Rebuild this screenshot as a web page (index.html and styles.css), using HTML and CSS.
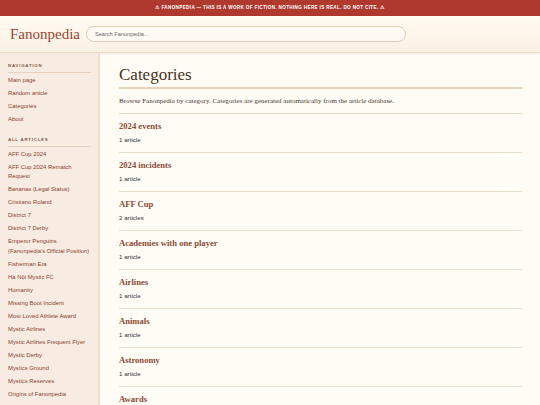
FILE: index.html
```html
<!DOCTYPE html>
<html lang="en">

<head>
    <meta charset="UTF-8">
    <meta name="viewport" content="width=device-width, initial-scale=1.0">
    <title>Categories - Fanonpedia</title>
    <link rel="stylesheet" href="styles.css">
</head>

<body>
    <div class="banner">&#9888; Fanonpedia &mdash; This is a work of fiction. Nothing here is real. Do not cite. &#9888;</div>

    <header class="site-header">
        <a class="logo" href="#">Fanonpedia</a>
        <input class="search" type="text" placeholder="Search Fanonpedia...">
    </header>

    <div class="layout">
        <!-- Sidebar -->
        <nav class="sidebar">
            <div class="side-section">
                <h4 class="side-title">Navigation</h4>
                <ul class="side-list">
                    <li><a href="#">Main page</a></li>
                    <li><a href="#">Random article</a></li>
                    <li><a href="#">Categories</a></li>
                    <li><a href="#">About</a></li>
                </ul>
            </div>
            <div class="side-section">
                <h4 class="side-title">All articles</h4>
                <ul class="side-list">
                    <li><a href="#">AFF Cup 2024</a></li>
                    <li><a href="#">AFF Cup 2024 Rematch Request</a></li>
                    <li><a href="#">Bananas (Legal Status)</a></li>
                    <li><a href="#">Cristiano Roland</a></li>
                    <li><a href="#">District 7</a></li>
                    <li><a href="#">District 7 Derby</a></li>
                    <li><a href="#">Emperor Penguins (Fanonpedia's Official Position)</a></li>
                    <li><a href="#">Fisherman Era</a></li>
                    <li><a href="#">Hà Nội Mystic FC</a></li>
                    <li><a href="#">Humanity</a></li>
                    <li><a href="#">Missing Boot Incident</a></li>
                    <li><a href="#">Most Loved Athlete Award</a></li>
                    <li><a href="#">Mystic Airlines</a></li>
                    <li><a href="#">Mystic Airlines Frequent Flyer</a></li>
                    <li><a href="#">Mystic Derby</a></li>
                    <li><a href="#">Mystics Ground</a></li>
                    <li><a href="#">Mystics Reserves</a></li>
                    <li><a href="#">Origins of Fanonpedia</a></li>
                    <li><a href="#">Partnerships Policy</a></li>
                </ul>
            </div>
        </nav>

        <!-- Contenuto principale -->
        <main class="content">
            <h1 class="page-title">Categories</h1>
            <p class="intro">Browse Fanonpedia by category. Categories are generated automatically from the article database.</p>

            <div class="cat-list">
                <div class="cat">
                    <a class="cat-name" href="#">2024 events</a>
                    <div class="cat-count">1 article</div>
                </div>
                <div class="cat">
                    <a class="cat-name" href="#">2024 incidents</a>
                    <div class="cat-count">1 article</div>
                </div>
                <div class="cat">
                    <a class="cat-name" href="#">AFF Cup</a>
                    <div class="cat-count">2 articles</div>
                </div>
                <div class="cat">
                    <a class="cat-name" href="#">Academies with one player</a>
                    <div class="cat-count">1 article</div>
                </div>
                <div class="cat">
                    <a class="cat-name" href="#">Airlines</a>
                    <div class="cat-count">1 article</div>
                </div>
                <div class="cat">
                    <a class="cat-name" href="#">Animals</a>
                    <div class="cat-count">1 article</div>
                </div>
                <div class="cat">
                    <a class="cat-name" href="#">Astronomy</a>
                    <div class="cat-count">1 article</div>
                </div>
                <div class="cat">
                    <a class="cat-name" href="#">Awards</a>
                    <div class="cat-count">1 article</div>
                </div>
            </div>
        </main>
    </div>
</body>

</html>
```

FILE: styles.css
```css
body {
    margin: 0;
    font-family: "Liberation Sans", Arial, sans-serif;
    background-color: #fffcf6;
    color: #333;
}

a {
    text-decoration: none;
}

.banner {
    height: 16px;
    line-height: 16px;
    background-color: #b0392e;
    color: #fff;
    text-align: center;
    font-size: 4.6px;
    font-weight: bold;
    letter-spacing: 0.35px;
    text-transform: uppercase;
}

.site-header {
    height: 36px;
    display: flex;
    align-items: center;
    padding: 0 10px;
    background: linear-gradient(to bottom, #fffaf2, #fbf1e4);
    border-bottom: 1px solid #ecd8c3;
    box-shadow: 0 1px 2px rgba(160, 110, 70, 0.12);
}

.logo {
    width: 76px;
    font-family: "Liberation Serif", "Times New Roman", serif;
    font-size: 15px;
    color: #9a4535;
}

.search {
    width: 320px;
    height: 16px;
    box-sizing: border-box;
    padding: 0 8px;
    border: 1px solid #dfcdb6;
    border-radius: 8px;
    background-color: #fffbf4;
    font-family: "Liberation Sans", Arial, sans-serif;
    font-size: 5.6px;
    color: #444;
    outline: none;
}

.search::placeholder {
    color: #666;
}

.layout {
    display: grid;
    grid-template-columns: 100px 1fr;
    min-height: calc(100vh - 53px);
}

.sidebar {
    background-color: #f8ece2;
    border-right: 2px solid #f0dccb;
    padding: 10px 7px 0 8px;
}

.side-section {
    margin-bottom: 10px;
}

.side-title {
    margin: 0;
    font-size: 4.4px;
    line-height: 6px;
    font-weight: bold;
    letter-spacing: 0.75px;
    text-transform: uppercase;
    color: #7a5a4a;
    padding-bottom: 3px;
    border-bottom: 1px solid #e6d2bf;
}

.side-list {
    list-style: none;
    margin: 0;
    padding: 1.5px 0 0 0;
}

.side-list li {
    font-size: 5.9px;
    line-height: 9.5px;
    padding: 1.75px 0;
}

.side-list a {
    color: #8b4030;
}

.content {
    padding: 11px 18px 0 19px;
}

.page-title {
    margin: 0;
    font-family: "Liberation Serif", "Times New Roman", serif;
    font-weight: normal;
    font-size: 17px;
    line-height: 22px;
    color: #4a3325;
    padding-bottom: 1px;
    border-bottom: 2px solid #e6d3bf;
}

.intro {
    margin: 7px 0 0 0;
    font-family: "Liberation Serif", "Times New Roman", serif;
    font-size: 7px;
    line-height: 10px;
    color: #4a3a30;
    padding-bottom: 7px;
    border-bottom: 1px solid #e8d9c7;
}

.cat {
    padding: 6px 0 8px 0;
    border-bottom: 1px solid #ecdfcf;
}

.cat-name {
    display: block;
    font-family: "Liberation Serif", "Times New Roman", serif;
    font-weight: bold;
    font-size: 8.6px;
    line-height: 12px;
    color: #8b4a35;
}

.cat-count {
    margin-top: 4px;
    font-size: 6.2px;
    line-height: 8px;
    color: #333;
}
```
